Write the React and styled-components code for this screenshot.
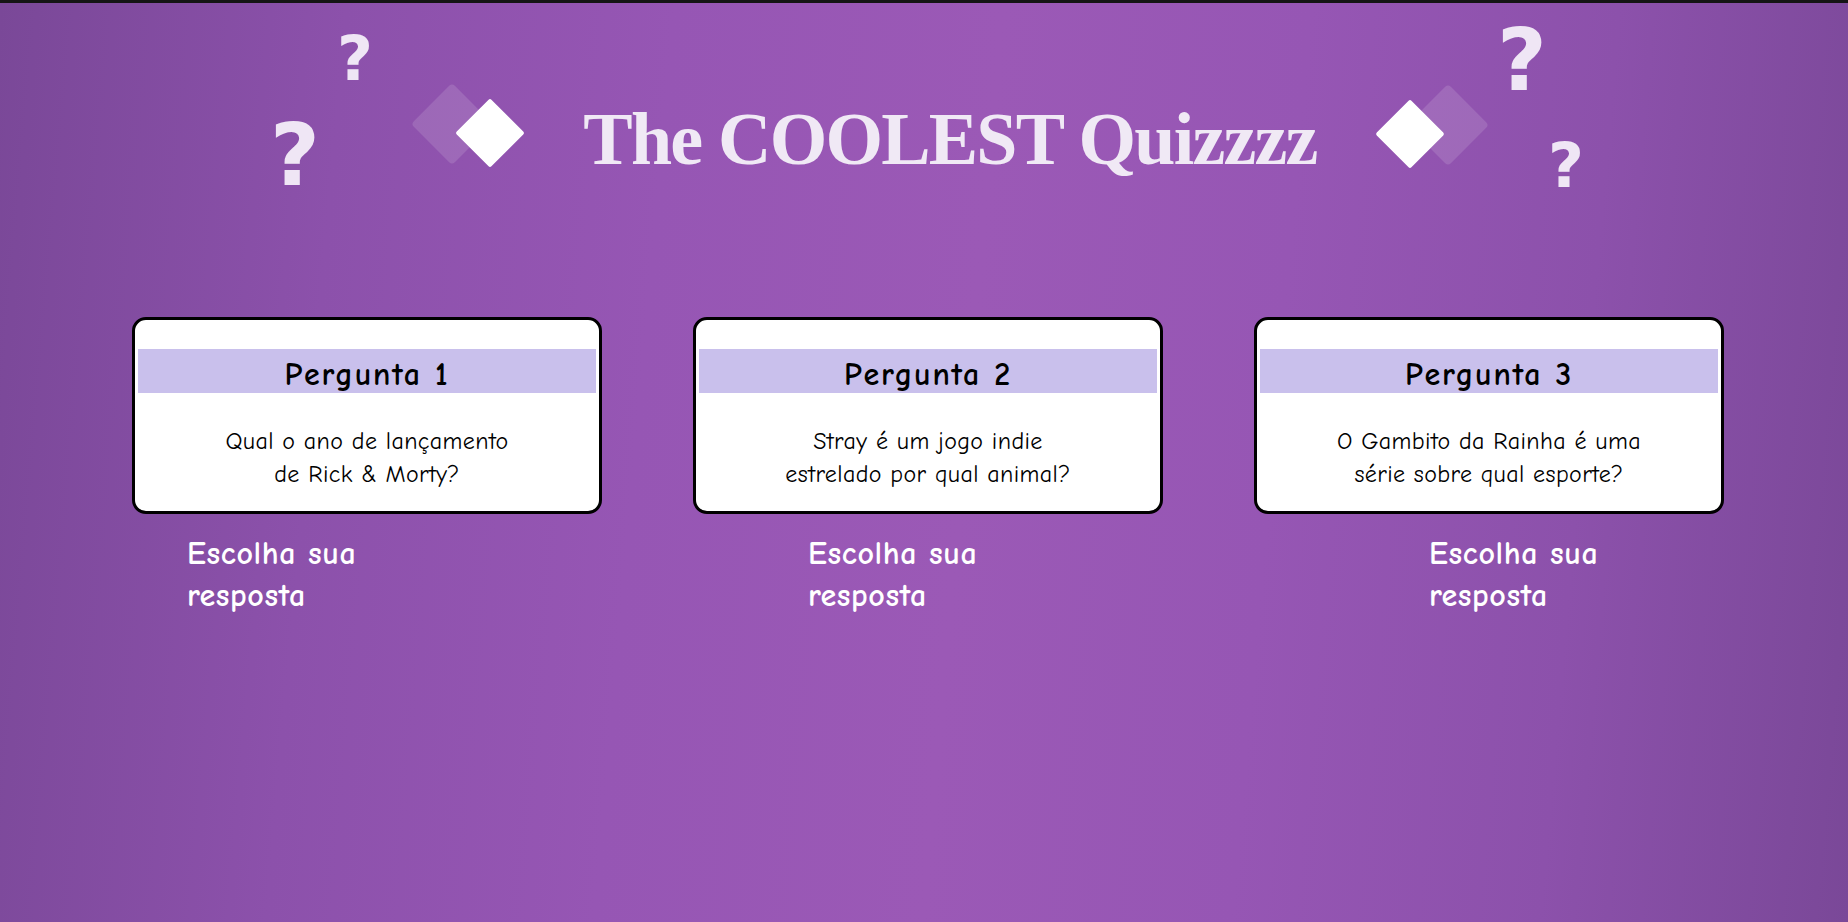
import React from "react";
import styled, { createGlobalStyle } from "styled-components";

const GlobalStyle = createGlobalStyle`
  html, body {
    margin: 0;
    padding: 0;
  }
  * {
    box-sizing: border-box;
  }
`

const Page = styled.div`
  min-height: 100vh;
  border-top: 3px solid #151515;
  background: linear-gradient(95deg, #7a4898 0%, #8c51ab 18%, #9656b4 35%, #9b59b6 52%, #9656b4 68%, #8c51ab 84%, #7a4898 100%);
  font-family: "Comic Sans MS", "Comic Neue", "Open Sans", sans-serif;
`

// decorative question marks float freely over the header
const Header = styled.header`
  position: relative;
  height: 314px;
  display: flex;
  justify-content: center;
  align-items: flex-start;
  gap: 57px;
  padding: 80px 0 0 52px;
`

const Title = styled.h1`
  margin: 19px 0 0;
  font-family: "Liberation Serif", "Times New Roman", serif;
  font-weight: 700;
  font-size: 74px;
  line-height: 1;
  letter-spacing: -1.8px;
  color: #f0e9f5;
  white-space: nowrap;
`

const DiamondSvg = styled.svg`
  flex-shrink: 0;
  display: block;
  margin-top: ${p => (p.$flip ? "1px" : "0")};
  transform: ${p => (p.$flip ? "scaleX(-1)" : "none")};
`

const Mark = styled.span`
  position: absolute;
  left: ${p => p.$x}px;
  top: ${p => p.$y}px;
  font-family: "DejaVu Sans", Lato, sans-serif;
  font-weight: 700;
  font-size: ${p => p.$size}px;
  line-height: 1;
  color: #efe6f5;
`

const CardRow = styled.section`
  display: grid;
  grid-template-columns: repeat(3, 470px);
  column-gap: 91px;
  padding-left: 132px;
`

const Card = styled.div`
  height: 197px;
  background: #ffffff;
  border: 3px solid #000000;
  border-radius: 14px;
  padding: 29px 3px 0;
  text-align: center;
  color: #000000;
`

const CardTitle = styled.h2`
  margin: 0;
  height: 44px;
  padding-top: 4px;
  line-height: 44px;
  background: #c9c0ec;
  font-size: 32px;
  font-weight: 700;
  letter-spacing: 1.8px;
`

const Question = styled.p`
  margin: 32px 0 0;
  font-size: 24px;
  line-height: 33px;
  letter-spacing: 0.4px;
`

const AnswerRow = styled.section`
  display: grid;
  grid-template-columns: repeat(3, 200px);
  column-gap: 421px;
  padding: 19px 0 0 187px;
`

const AnswerLabel = styled.h3`
  margin: 0;
  font-size: 32px;
  line-height: 42px;
  font-weight: 700;
  letter-spacing: 0.6px;
  color: #ffffff;
`

function DiamondPair({ flip }) {
  return (
    <DiamondSvg $flip={flip} width="114" height="86" viewBox="0 0 114 86">
      <rect x="11" y="12" width="58" height="58" rx="4" transform="rotate(45 40 41)" fill="#ffffff" fillOpacity="0.13" />
      <rect x="53.5" y="25.5" width="49" height="49" rx="2" transform="rotate(45 78 50)" fill="#ffffff" />
    </DiamondSvg>
  )
}

const questions = [
  { title: "Pergunta 1", lines: ["Qual o ano de lançamento", "de Rick & Morty?"] },
  { title: "Pergunta 2", lines: ["Stray é um jogo indie", "estrelado por qual animal?"] },
  { title: "Pergunta 3", lines: ["O Gambito da Rainha é uma", "série sobre qual esporte?"] },
]

export default function App() {
  return (
    <>
      <GlobalStyle />
      <Page>
        <Header>
          <Mark $x={337} $y={25} $size={62}>?</Mark>
          <Mark $x={270} $y={109} $size={86}>?</Mark>
          <Mark $x={1497} $y={14} $size={86}>?</Mark>
          <Mark $x={1548} $y={132} $size={62}>?</Mark>

          <DiamondPair />
          <Title>The COOLEST Quizzzz</Title>
          <DiamondPair flip />
        </Header>

        <CardRow>
          {questions.map(q => (
            <Card key={q.title}>
              <CardTitle>{q.title}</CardTitle>
              <Question>
                {q.lines[0]}
                <br />
                {q.lines[1]}
              </Question>
            </Card>
          ))}
        </CardRow>

        <AnswerRow>
          {questions.map(q => (
            <AnswerLabel key={q.title}>Escolha sua resposta</AnswerLabel>
          ))}
        </AnswerRow>
      </Page>
    </>
  )
}
